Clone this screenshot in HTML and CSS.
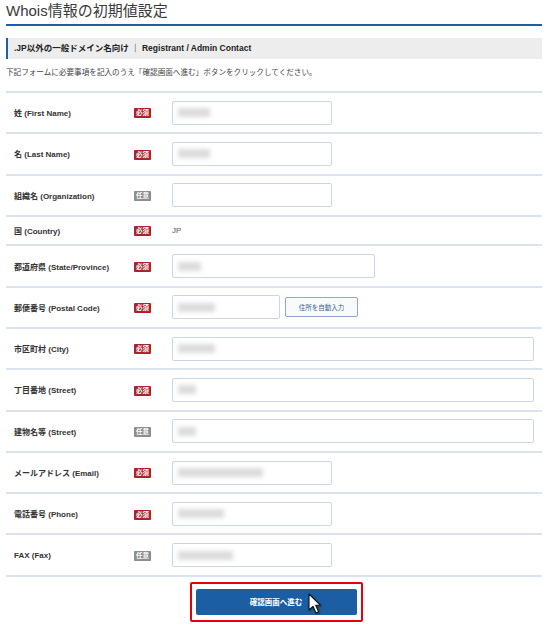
FILE: index.html
```html
<!DOCTYPE html>
<html lang="ja">
<head>
    <meta charset="UTF-8">
    <meta name="viewport" content="width=device-width, initial-scale=1.0">
    <title>Whois情報の初期値設定</title>
    <link rel="stylesheet" href="styles.css">
</head>
<body>
    <div class="page">
        <h1 class="page-title">Whois情報の初期値設定</h1>

        <h2 class="section-head">.JP以外の一般ドメイン名向け ｜ Registrant / Admin Contact</h2>
        <p class="lead">下記フォームに必要事項を記入のうえ「確認画面へ進む」ボタンをクリックしてください。</p>

        <div class="form-table">
            <div class="form-row">
                <div class="form-label">姓 (First Name)</div>
                <div><span class="badge badge-req">必須</span></div>
                <div class="form-field"><div class="field"><span class="mask mask-m"></span></div></div>
            </div>
            <div class="form-row">
                <div class="form-label">名 (Last Name)</div>
                <div><span class="badge badge-req">必須</span></div>
                <div class="form-field"><div class="field"><span class="mask mask-m"></span></div></div>
            </div>
            <div class="form-row">
                <div class="form-label">組織名 (Organization)</div>
                <div><span class="badge badge-opt">任意</span></div>
                <div class="form-field"><div class="field"></div></div>
            </div>
            <div class="form-row form-row-short">
                <div class="form-label">国 (Country)</div>
                <div><span class="badge badge-req">必須</span></div>
                <div class="form-field"><span class="plain-value">JP</span></div>
            </div>
            <div class="form-row">
                <div class="form-label">都道府県 (State/Province)</div>
                <div><span class="badge badge-req">必須</span></div>
                <div class="form-field"><div class="field field-state"><span class="mask mask-s"></span></div></div>
            </div>
            <div class="form-row">
                <div class="form-label">郵便番号 (Postal Code)</div>
                <div><span class="badge badge-req">必須</span></div>
                <div class="form-field">
                    <div class="field field-postal"><span class="mask mask-ml"></span></div>
                    <button class="auto-btn" type="button">住所を自動入力</button>
                </div>
            </div>
            <div class="form-row">
                <div class="form-label">市区町村 (City)</div>
                <div><span class="badge badge-req">必須</span></div>
                <div class="form-field"><div class="field field-wide"><span class="mask mask-ml"></span></div></div>
            </div>
            <div class="form-row">
                <div class="form-label">丁目番地 (Street)</div>
                <div><span class="badge badge-req">必須</span></div>
                <div class="form-field"><div class="field field-wide"><span class="mask mask-xs"></span></div></div>
            </div>
            <div class="form-row">
                <div class="form-label">建物名等 (Street)</div>
                <div><span class="badge badge-opt">任意</span></div>
                <div class="form-field"><div class="field field-wide"><span class="mask mask-xs"></span></div></div>
            </div>
            <div class="form-row">
                <div class="form-label">メールアドレス (Email)</div>
                <div><span class="badge badge-req">必須</span></div>
                <div class="form-field"><div class="field"><span class="mask mask-xl"></span></div></div>
            </div>
            <div class="form-row">
                <div class="form-label">電話番号 (Phone)</div>
                <div><span class="badge badge-req">必須</span></div>
                <div class="form-field"><div class="field"><span class="mask mask-l"></span></div></div>
            </div>
            <div class="form-row">
                <div class="form-label">FAX (Fax)</div>
                <div><span class="badge badge-opt">任意</span></div>
                <div class="form-field"><div class="field"><span class="mask mask-ll"></span></div></div>
            </div>
        </div>

        <div class="submit-area">
            <div class="submit-frame">
                <button class="submit-btn" type="button">確認画面へ進む</button>
                <svg class="pointer" width="14" height="22" viewBox="0 0 14 22">
                    <path d="M1 1 L1 17 L5 13.3 L8 20 L10.6 18.8 L7.7 12.3 L12.6 12.3 Z" fill="#fff" stroke="#111" stroke-width="1.1" stroke-linejoin="round"/>
                </svg>
            </div>
        </div>
    </div>
</body>
</html>
```

FILE: styles.css
```css
* {
    margin: 0;
    padding: 0;
    box-sizing: border-box;
}

body {
    font-family: "Liberation Sans", "Noto Sans CJK JP", sans-serif;
    background-color: #ffffff;
    color: #333;
}

.page {
    padding: 0 8px 0 6px;
}

/* heading */
.page-title {
    font-size: 15px;
    font-weight: normal;
    line-height: 22px;
    color: #3a3a3a;
    padding-bottom: 2px;
    border-bottom: 2px solid #1f5fa6;
}

.section-head {
    margin-top: 12px;
    height: 21px;
    line-height: 21px;
    padding-left: 6px;
    font-size: 8.5px;
    font-weight: bold;
    color: #222;
    background-color: #ededed;
    border-left: 2px solid #1f5fa6;
}

.lead {
    margin-top: 9px;
    font-size: 7.6px;
    line-height: 10px;
    color: #444;
}

/* form rows */
.form-table {
    margin-top: 13px;
    border-top: 2px solid #dbe4ee;
}

.form-row {
    display: grid;
    grid-template-columns: 120px 38px 1fr;
    align-items: center;
    height: 41.3px;
    padding-left: 8px;
    border-bottom: 2px solid #dbe4ee;
}

.form-row-short {
    height: 29.5px;
}

.form-label {
    font-size: 8px;
    font-weight: bold;
    color: #333;
}

.badge {
    display: inline-block;
    width: 17px;
    height: 10px;
    line-height: 10px;
    font-size: 6.5px;
    font-weight: bold;
    text-align: center;
    color: #fff;
    border-radius: 1px;
    vertical-align: middle;
}

.badge-req {
    background-color: #a8242a;
}

.badge-opt {
    background-color: #8d8d8d;
}

.form-field {
    display: flex;
    align-items: center;
    gap: 5px;
}

.plain-value {
    font-size: 8px;
    color: #555;
}

.field {
    width: 160px;
    height: 24px;
    border: 1.5px solid #c9d8e8;
    border-radius: 2px;
    background-color: #fff;
    display: flex;
    align-items: center;
    padding-left: 5px;
}

.field-state {
    width: 203px;
}

.field-postal {
    width: 108px;
}

.field-wide {
    width: 362px;
}

/* blurred entries */
.mask {
    display: block;
    height: 9px;
    background-color: #dcdcdc;
    filter: blur(2px);
}

.mask-xs { width: 18px; }
.mask-s { width: 23px; }
.mask-m { width: 32px; }
.mask-ml { width: 37px; }
.mask-l { width: 46px; }
.mask-ll { width: 55px; }
.mask-xl { width: 85px; }

.auto-btn {
    width: 73px;
    height: 20px;
    font-family: inherit;
    font-size: 6.5px;
    color: #3a5f8e;
    background-color: #f8fafc;
    border: 1px solid #8ea8c6;
    border-radius: 2px;
}

/* submit */
.submit-area {
    display: flex;
    justify-content: center;
    margin-top: 5px;
}

.submit-frame {
    position: relative;
    padding: 5px 4px;
    border: 2px solid #e3000f;
    border-radius: 2px;
    margin-left: 4px;
}

.submit-btn {
    display: block;
    width: 161px;
    height: 26px;
    font-family: inherit;
    font-size: 7.5px;
    font-weight: bold;
    color: #fff;
    background-color: #1c5ea3;
    border: none;
    border-radius: 2px;
}

.pointer {
    position: absolute;
    left: 116px;
    top: 9px;
    filter: drop-shadow(1px 1px 1px rgba(0, 0, 0, 0.35));
}
```
